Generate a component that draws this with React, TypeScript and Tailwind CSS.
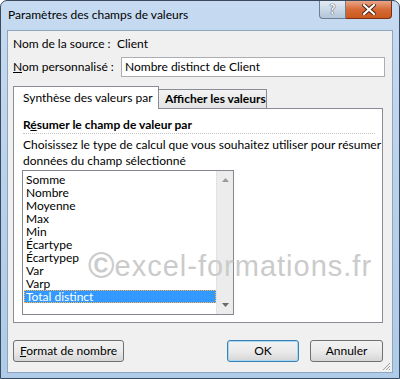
import React from 'react';

const items = ['Somme', 'Nombre', 'Moyenne', 'Max', 'Min', 'Écartype', 'Écartypep', 'Var', 'Varp', 'Total distinct'];

const Btn = ({ children, w, focus }: { children: React.ReactNode; w: string; focus?: boolean }) => (
  <div
    className={`${w} h-[22px] rounded-[3px] border ${
      focus ? 'border-[#3c7fb1] shadow-[inset_0_0_0_1px_#a6d7f5]' : 'border-[#707070]'
    } bg-gradient-to-b from-[#f2f2f2] via-[#ebebeb] to-[#d6d6d6] flex items-center justify-center text-black`}
  >
    {children}
  </div>
);

export default function App() {
  return (
    <div className="w-[400px] h-[379px] relative overflow-hidden font-['Lato','Liberation_Sans',sans-serif] text-[12px] text-black bg-white">
      {/* Window frame */}
      <div className="w-full h-full rounded-t-[7px] border border-[#3a4a5c] bg-gradient-to-b from-[#c6dbf1] via-[#b9d1ea] to-[#aecbe9] flex flex-col">
        {/* Title bar */}
        <div className="h-[29px] flex items-start shrink-0">
          <div className="pl-[7px] pt-[6px] leading-[16px] text-black">Paramètres des champs de valeurs</div>
          <div className="ml-auto mr-[7px] flex">
            <div className="w-[27px] h-[18px] rounded-bl-[4px] border border-t-0 border-[#6c7e92] bg-gradient-to-b from-[#e3ebf4] to-[#b3c5d9] flex items-center justify-center">
              <span className="font-bold text-[13px] leading-none text-white [text-shadow:0_0_1px_#334,0_0_1px_#334]">?</span>
            </div>
            <div className="w-[46px] h-[18px] rounded-br-[4px] border border-t-0 border-l-0 border-[#7e2e14] bg-gradient-to-b from-[#e9a587] via-[#d66a36] to-[#c95a1c] flex items-center justify-center">
              <svg width="14" height="11" viewBox="0 0 14 11">
                <path d="M2 1 L12 10 M12 1 L2 10" stroke="#4a2010" strokeWidth="4" strokeLinecap="square" />
                <path d="M2 1 L12 10 M12 1 L2 10" stroke="#ffffff" strokeWidth="2.2" strokeLinecap="square" />
              </svg>
            </div>
          </div>
        </div>

        {/* Client area */}
        <div className="mx-[6px] mb-[5px] flex-1 border border-[#8ea5bf] bg-[#f0f0f0] flex flex-col pl-[5px] relative">
          <div className="mt-[5px] h-[16px] flex items-center whitespace-nowrap">
            <span className="w-[104px]">Nom de la source :</span>
            <span>Client</span>
          </div>
          <div className="mt-[5px] h-[20px] flex items-center whitespace-nowrap">
            <span className="w-[108px]">
              <span className="underline">N</span>om personnalisé :
            </span>
            <div className="w-[264px] h-[20px] border border-[#abadb3] bg-white flex items-center pl-[3px]">Nombre distinct de Client</div>
          </div>

          {/* Tabs */}
          <div className="mt-[9px] h-[23px] flex items-end relative z-10 whitespace-nowrap">
            <div className="w-[146px] h-[23px] border border-b-0 border-[#898c95] bg-white flex items-center pl-[9px] pb-[1px]">Synthèse des valeurs par</div>
            <div className="w-[109px] h-[19px] mb-[1px] -ml-px border border-b-0 border-[#898c95] bg-gradient-to-b from-[#f3f3f3] to-[#e3e3e3] flex items-center pl-[6px] font-bold">Afficher les valeurs</div>
          </div>
          <div className="-mt-px w-[370px] h-[215px] border border-[#898c95] bg-white flex flex-col pl-[9px]">
            <div className="mt-[8px] h-[16px] flex items-center font-bold">
              <span>
                R<span className="underline">é</span>sumer le champ de valeur par
              </span>
            </div>
            <div className="w-[352px] border-b border-dotted border-[#c5c5c5]"></div>
            <div className="mt-[3px] leading-[16px] whitespace-nowrap">
              Choisissez le type de calcul que vous souhaitez utiliser pour résumer
              <br />
              données du champ sélectionné
            </div>
            <div className="mt-[1px] -ml-px w-[212px] h-[145px] border border-[#828790] bg-white flex">
              <div className="w-[193px] pt-[2px] pl-px">
                {items.map((it, i) =>
                  i === items.length - 1 ? (
                    <div key={it} className="h-[13px] leading-[11px] bg-[#3399ff] text-white pl-[1px] border border-dotted border-[#ffb347]">
                      {it}
                    </div>
                  ) : (
                    <div key={it} className="h-[13px] leading-[13px] pl-[2px]">
                      {it}
                    </div>
                  )
                )}
              </div>
              <div className="w-[17px] h-full bg-[#ececec] border-l border-dotted border-[#dadada] flex flex-col items-center justify-between py-[7px]">
                <svg width="7" height="4" viewBox="0 0 7 4">
                  <path d="M0 4 L3.5 0 L7 4 Z" fill="#9a9a9a" />
                </svg>
                <svg width="7" height="4" viewBox="0 0 7 4">
                  <path d="M0 0 L7 0 L3.5 4 Z" fill="#6a6a6a" />
                </svg>
              </div>
            </div>
          </div>

          {/* Buttons */}
          <div className="mt-[17px] flex">
            <Btn w="w-[111px]">
              <span>
                <span className="underline">F</span>ormat de nombre
              </span>
            </Btn>
            <div className="ml-[103px]">
              <Btn w="w-[72px]" focus>
                OK
              </Btn>
            </div>
            <div className="ml-[11px]">
              <Btn w="w-[73px]">Annuler</Btn>
            </div>
          </div>

          {/* Resize grip */}
          <svg className="absolute right-[1px] bottom-[1px]" width="10" height="10" viewBox="0 0 10 10">
            <path d="M9 2 L2 9 M9 5 L5 9 M9 8 L8 9" stroke="#a0a0a0" strokeWidth="1" />
          </svg>

          {/* Watermark */}
          <div className="absolute left-[80px] top-[217px] flex items-center text-[#cbcbcb] font-['Liberation_Sans',Arial,sans-serif] pointer-events-none z-20">
            <span className="text-[36px] leading-none font-bold">©</span>
            <span className="text-[29px] leading-none tracking-[1px]">excel-formations.fr</span>
          </div>
        </div>
      </div>
    </div>
  );
}
